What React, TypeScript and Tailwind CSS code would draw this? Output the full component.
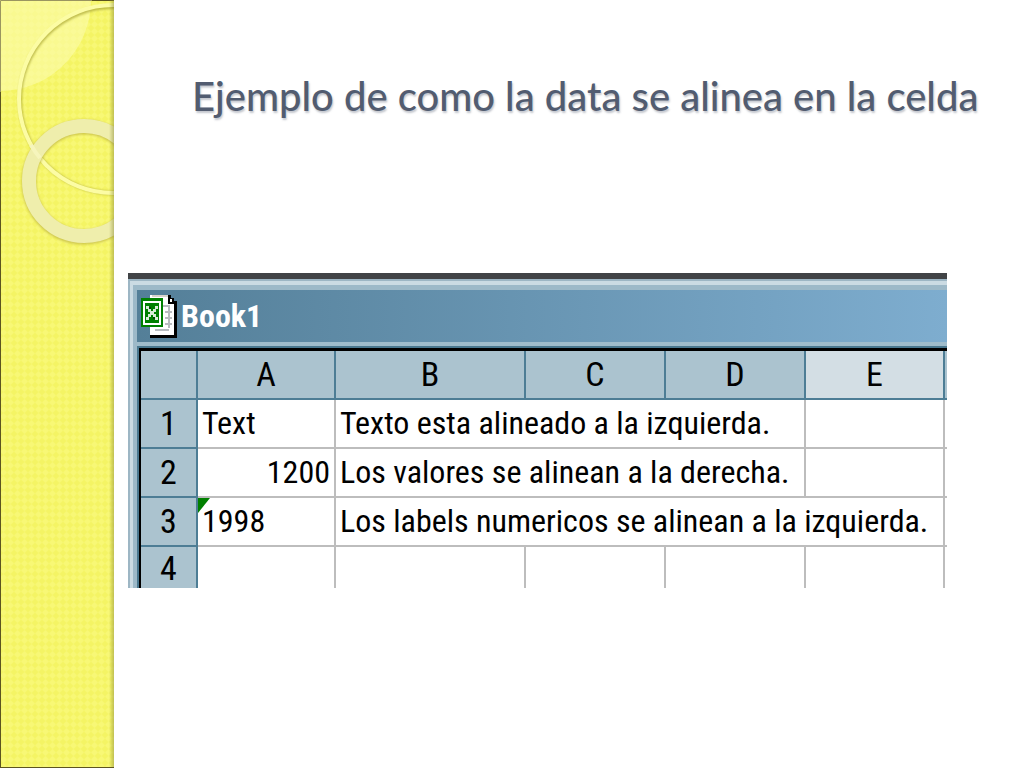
import React from 'react';

type Row = {
  id: number;
  a: string;
  numeric?: boolean;
  flagged?: boolean;
  b: string;
  span: number;
};

const rows: Row[] = [
  { id: 1, a: 'Text', b: 'Texto esta alineado a la izquierda.', span: 3 },
  { id: 2, a: '1200', numeric: true, b: 'Los valores se alinean a la derecha.', span: 3 },
  { id: 3, a: '1998', flagged: true, b: 'Los labels numericos se alinean a la izquierda.', span: 4 },
];

const columns = ['A', 'B', 'C', 'D', 'E'];

const SideBand: React.FC = () => (
  <aside className="relative w-[114px] shrink-0 overflow-hidden bg-[#f4f464]">
    <svg className="absolute inset-0 h-full w-full" aria-hidden="true">
      <defs>
        <pattern id="weave" width="7" height="7" patternUnits="userSpaceOnUse">
          <path d="M3.5 0L7 3.5L3.5 7L0 3.5Z" fill="#f9f97c" />
        </pattern>
        <linearGradient id="edge" x1="0" x2="1" y1="0" y2="0">
          <stop offset="0" stopColor="#8a8a3c" stopOpacity="0" />
          <stop offset="1" stopColor="#8a8a3c" stopOpacity="0.5" />
        </linearGradient>
        <filter id="soft" x="-10%" y="-10%" width="120%" height="120%">
          <feGaussianBlur stdDeviation="1.2" />
        </filter>
      </defs>
      <rect width="100%" height="100%" fill="url(#weave)" opacity="0.7" />
      <circle cx="0" cy="0" r="91" fill="#fbfbae" opacity="0.6" />
      <path d="M0.5 92V2000" stroke="#5c5420" />
      <path d="M92 0.5H114" stroke="#5c5420" />
      <path d="M0.5 92V0.5H92" stroke="#9a9560" fill="none" />

      <circle cx="113" cy="100" r="93" fill="none" stroke="#a8a430" strokeWidth="4" opacity="0.7" filter="url(#soft)" />
      <circle cx="113" cy="99" r="94" fill="none" stroke="#fcfca4" strokeWidth="4" />

      <circle cx="84" cy="182" r="55" fill="none" stroke="#b4a83c" strokeWidth="15" opacity="0.6" filter="url(#soft)" />
      <circle cx="84" cy="181" r="55" fill="none" stroke="#efeeac" strokeWidth="14" />
      <path d="M31 145A94 94 0 0 0 40 158" fill="none" stroke="#f6f5bc" strokeWidth="4" />
      <rect x="109" width="5" height="100%" fill="url(#edge)" />
    </svg>
    <div className="absolute inset-x-0 bottom-0 h-px bg-[#5c5420]" />
  </aside>
);

const BookIcon: React.FC = () => (
  <svg className="h-[44px] w-[36px] shrink-0" viewBox="0 0 36 44" shapeRendering="crispEdges" aria-hidden="true">
    <path d="M9 1H27V9H33V41H9Z" fill="#fff" />
    <path d="M11 1H27V3H11Z" fill="#d8d4cc" />
    <path d="M27 1H30V4H33V7H36V44H9V41H33V10H27Z" fill="#000" />
    <path d="M29 5H31V8H29Z" fill="#fff" />
    <path d="M22 11H28V13H22ZM24 17H31V19H24ZM24 23H31V25H24ZM24 29H31V31H24ZM14 35H28V37H14ZM27 11H29V34H27Z" fill="#b9bcc0" />
    <path d="M0 4H22V33H0Z" fill="#008000" />
    <path d="M2 7H20V31H2Z" fill="#fff" />
    <path d="M4 9H18V29H4Z" fill="#008000" />
    <path d="M5 12H8V15H10V17H12V15H14V12H17V15H15V18H13V20H15V23H17V26H14V23H12V21H10V23H8V26H5V23H7V20H9V18H7V15H5Z" fill="#d8ecd8" />
    <path d="M8 13H10V15H8ZM12 23H14V25H12Z" fill="#064806" />
  </svg>
);

const Sheet: React.FC = () => (
  <table className="w-full table-fixed border-separate border-spacing-0 bg-white text-[32px] leading-[47px] whitespace-nowrap text-black">
    <colgroup>
      <col className="w-[57px]" />
      <col className="w-[138px]" />
      <col className="w-[190px]" />
      <col className="w-[140px]" />
      <col className="w-[140px]" />
      <col className="w-[139px]" />
      <col />
    </colgroup>
    <thead>
      <tr className="bg-[#abc3cf]">
        <td className="border-r-2 border-b-2 border-[#4d7d95] p-0" />
        {columns.map((name) => (
          <th
            key={name}
            scope="col"
            className={`border-r-2 border-b-2 border-[#4d7d95] p-0 text-[34px] font-normal ${name === 'E' ? 'bg-[#d3dee4]' : ''}`}
          >
            {name}
          </th>
        ))}
        <td className="border-b-2 border-[#4d7d95] p-0" />
      </tr>
    </thead>
    <tbody>
      {rows.map((row) => (
        <tr key={row.id}>
          <th scope="row" className="border-r-2 border-b-2 border-[#4d7d95] bg-[#abc3cf] p-0 text-[34px] font-normal">
            {row.id}
          </th>
          <td className={`relative border-r-2 border-b-2 border-[#bdbdbd] px-1 py-0 ${row.numeric ? 'text-right' : ''}`}>
            {row.flagged && (
              <svg className="absolute top-0 left-0 h-[15px] w-[12px]" viewBox="0 0 12 15" aria-hidden="true">
                <path d="M0 0H12L0 15Z" fill="#008000" />
              </svg>
            )}
            {row.a}
          </td>
          <td colSpan={row.span} className="border-r-2 border-b-2 border-[#bdbdbd] px-1 py-0">
            {row.b}
          </td>
          {row.span === 3 && <td className="border-r-2 border-b-2 border-[#bdbdbd] p-0" />}
          <td className="border-b-2 border-[#bdbdbd] p-0" />
        </tr>
      ))}
      <tr>
        <th scope="row" className="border-r-2 border-[#4d7d95] bg-[#abc3cf] px-0 pt-px pb-0 text-[34px] leading-[40px] font-normal">
          4
        </th>
        {columns.map((name) => (
          <td key={name} className="border-r-2 border-[#bdbdbd] p-0" />
        ))}
        <td className="p-0" />
      </tr>
    </tbody>
  </table>
);

export default function App() {
  return (
    <div className="flex min-h-screen bg-white">
      <SideBand />
      <main className="min-w-0 flex-1 pr-[77px] pl-[14px]">
        <h1 className="-mr-8 ml-[64px] pt-[69px] font-['Lato',sans-serif] text-[40px] leading-[54px] font-medium whitespace-nowrap text-[#525c70] [text-shadow:1px_2px_2px_rgba(82,92,112,0.35)]">
          Ejemplo de como la data se alinea en la celda
        </h1>

        <section className="mt-[150px] overflow-hidden border-t-[6px] border-[#414346] font-['Roboto_Condensed','Roboto',sans-serif]">
          <div className="border-t-2 border-l-2 border-[#9db6c4]">
            <div className="border-t-4 border-l-3 border-[#cbdbe3]">
              <div className="border-t-[5px] border-l-4 border-[#9db9c8]">
                <header className="flex h-[52px] items-center gap-1 bg-linear-to-r from-[#547f98] to-[#7eadcf] pl-1">
                  <BookIcon />
                  <h2 className="text-[32px] leading-[48px] font-bold text-white">Book1</h2>
                </header>
                <div className="h-1 bg-[#9fbccb]" />
                <div className="border-t-2 border-l-2 border-[#4a788f]">
                  <div className="border-t-3 border-l-2 border-black">
                    <Sheet />
                  </div>
                </div>
              </div>
            </div>
          </div>
        </section>
      </main>
    </div>
  );
}
